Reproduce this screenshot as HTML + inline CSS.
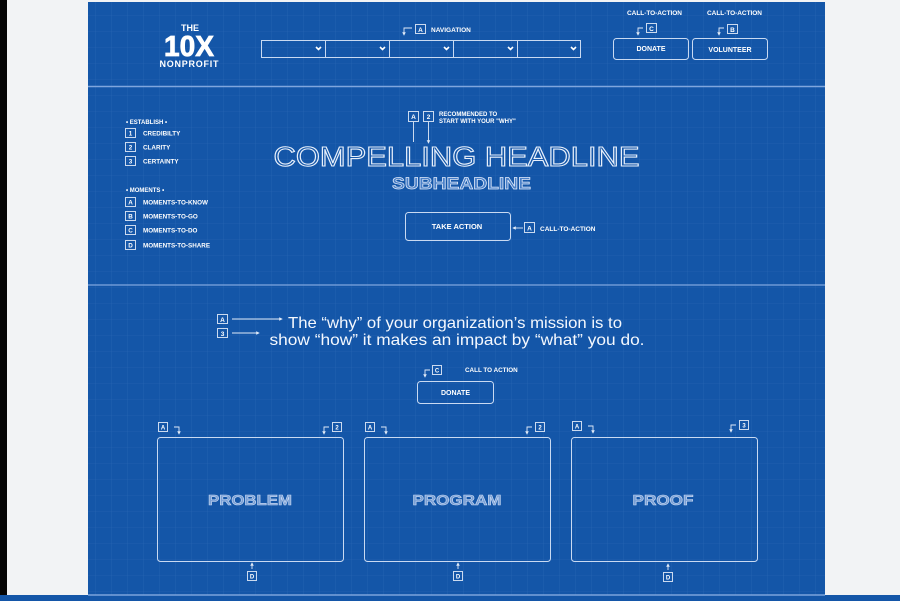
<!DOCTYPE html>
<html><head><meta charset="utf-8"><style>
html,body{margin:0;padding:0;background:#f2f3f5;}
svg{display:block}
text{font-family:"Liberation Sans",sans-serif;fill:#fff;font-weight:bold}
text.card{fill:#7aa0d6;stroke:#c8d9f2;stroke-width:0.6}
</style></head><body>
<svg width="900" height="601" viewBox="0 0 900 601" xmlns="http://www.w3.org/2000/svg">
<defs>
<pattern id="g" width="16" height="16" patternUnits="userSpaceOnUse">
<path d="M16 0V16M0 16H16" stroke="#2a68b4" stroke-width="0.6" fill="none"/>
</pattern>
<marker id="ah" markerWidth="4" markerHeight="4" refX="2" refY="2" orient="auto"><path d="M0,0L4,2L0,4z" fill="#dfe9f7"/></marker>
</defs>
<rect width="900" height="601" fill="#f2f3f5"/>
<rect x="0" y="0" width="7" height="601" fill="#050505"/>
<rect x="88" y="2" width="737" height="599" fill="#1456a8"/>
<rect x="88" y="2" width="737" height="599" fill="url(#g)"/>
<rect x="0" y="595" width="900" height="6" fill="#1456a8"/>
<line x1="88" y1="595" x2="825" y2="595" stroke="#8fb4e6" stroke-width="1.2"/>
<line x1="88" y1="86.5" x2="825" y2="86.5" stroke="#7fa6dd" stroke-width="1.5"/>
<line x1="88" y1="285" x2="825" y2="285" stroke="#7fa6dd" stroke-width="1.2"/>

<text x="190" y="31" font-size="9" text-anchor="middle">THE</text>
<text x="189" y="56" font-size="29" text-anchor="middle" textLength="50" lengthAdjust="spacingAndGlyphs" style="stroke:#fff;stroke-width:0.8">10X</text>
<text x="189" y="67" font-size="9" text-anchor="middle" textLength="59">NONPROFIT</text>

<g fill="none" stroke="#c9daf2" stroke-width="1">
<rect x="261.5" y="40.5" width="319" height="17"/>
<line x1="325.5" y1="40" x2="325.5" y2="58"/><line x1="389.5" y1="40" x2="389.5" y2="58"/>
<line x1="453.5" y1="40" x2="453.5" y2="58"/><line x1="517.5" y1="40" x2="517.5" y2="58"/>
</g>
<g fill="none" stroke="#fff" stroke-width="1.6">
<path d="M316 47l2.5 2.5 2.5-2.5M380 47l2.5 2.5 2.5-2.5M444 47l2.5 2.5 2.5-2.5M508 47l2.5 2.5 2.5-2.5M571 47l2.5 2.5 2.5-2.5"/>
</g>
<g fill="none" stroke="#dfe9f7" stroke-width="0.9">
<path d="M412 28h-8v6" marker-end="url(#ah)"/><rect x="415.5" y="24.5" width="10" height="9"/>
<path d="M643 28h-5v6" marker-end="url(#ah)"/><rect x="646.5" y="23.5" width="10" height="9"/>
<path d="M724 28h-5v6" marker-end="url(#ah)"/><rect x="727.5" y="24.5" width="10" height="9"/>
</g>
<text x="420.5" y="32" font-size="6.5" text-anchor="middle">A</text>
<text x="431" y="32" font-size="6.5">NAVIGATION</text>
<text x="651.5" y="31" font-size="6.5" text-anchor="middle">C</text>
<text x="732.5" y="32" font-size="6.5" text-anchor="middle">B</text>
<text x="627" y="15" font-size="6.5" textLength="55">CALL-TO-ACTION</text>
<text x="707" y="15" font-size="6.5" textLength="55">CALL-TO-ACTION</text>
<g fill="none" stroke="#c9daf2" stroke-width="1">
<rect x="613.5" y="38.5" width="75" height="21" rx="3"/>
<rect x="692.5" y="38.5" width="75" height="21" rx="3"/>
</g>
<text x="651" y="51" font-size="7" text-anchor="middle">DONATE</text>
<text x="730" y="52" font-size="7" text-anchor="middle">VOLUNTEER</text>

<text x="126" y="124" font-size="6">• ESTABLISH •</text>
<text x="126" y="192" font-size="6">• MOMENTS •</text>
<g fill="none" stroke="#dfe9f7" stroke-width="0.9">
<rect x="125.5" y="128.5" width="10" height="9"/><rect x="125.5" y="142.5" width="10" height="9"/><rect x="125.5" y="156.5" width="10" height="9"/>
<rect x="125.5" y="197.5" width="10" height="9"/><rect x="125.5" y="211.5" width="10" height="9"/><rect x="125.5" y="225.5" width="10" height="9"/><rect x="125.5" y="240.5" width="10" height="9"/>
</g>
<g font-size="6.3">
<text x="130.5" y="135.5" text-anchor="middle">1</text><text x="143" y="135.5">CREDIBILTY</text>
<text x="130.5" y="149.5" text-anchor="middle">2</text><text x="143" y="149.5">CLARITY</text>
<text x="130.5" y="163.5" text-anchor="middle">3</text><text x="143" y="163.5">CERTAINTY</text>
<text x="130.5" y="204.5" text-anchor="middle">A</text><text x="143" y="204.5">MOMENTS-TO-KNOW</text>
<text x="130.5" y="218.5" text-anchor="middle">B</text><text x="143" y="218.5">MOMENTS-TO-GO</text>
<text x="130.5" y="232.5" text-anchor="middle">C</text><text x="143" y="232.5">MOMENTS-TO-DO</text>
<text x="130.5" y="247.5" text-anchor="middle">D</text><text x="143" y="247.5">MOMENTS-TO-SHARE</text>
</g>

<g fill="none" stroke="#dfe9f7" stroke-width="0.9">
<rect x="408.5" y="111.5" width="10" height="10"/><rect x="423.5" y="111.5" width="10" height="10"/>
<path d="M413.5 122v20M428.5 122v20" marker-end="url(#ah)"/>
</g>
<text x="413.5" y="119" font-size="6.5" text-anchor="middle">A</text>
<text x="428.5" y="119" font-size="6.5" text-anchor="middle">2</text>
<text x="439" y="116" font-size="6">RECOMMENDED TO</text>
<text x="439" y="123" font-size="6">START WITH YOUR "WHY"</text>
<text x="456.5" y="166" font-size="28" text-anchor="middle" textLength="366" lengthAdjust="spacingAndGlyphs" style="fill:none;stroke:#e8f0fb;stroke-width:1.1;font-weight:normal">COMPELLING HEADLINE</text>
<text x="461.5" y="189" font-size="17" text-anchor="middle" textLength="139" lengthAdjust="spacingAndGlyphs" style="fill:#4a80c8;stroke:#e0eafa;stroke-width:0.7">SUBHEADLINE</text>
<rect x="405.5" y="212.5" width="105" height="28" rx="3" fill="none" stroke="#c9daf2"/>
<text x="457" y="229" font-size="7.5" text-anchor="middle">TAKE ACTION</text>
<g fill="none" stroke="#dfe9f7" stroke-width="0.9">
<path d="M523 228h-9" marker-end="url(#ah)"/><rect x="524.5" y="222.5" width="10" height="10"/>
</g>
<text x="529.5" y="230.5" font-size="6.5" text-anchor="middle">A</text>
<text x="540" y="231" font-size="6.5">CALL-TO-ACTION</text>

<g fill="none" stroke="#dfe9f7" stroke-width="0.9">
<rect x="217.5" y="314.5" width="10" height="9"/><rect x="217.5" y="328.5" width="10" height="9"/>
<path d="M232 319h49" marker-end="url(#ah)"/><path d="M232 333h26" marker-end="url(#ah)"/>
</g>
<text x="222.5" y="322" font-size="6.5" text-anchor="middle">A</text>
<text x="222.5" y="336" font-size="6.5" text-anchor="middle">3</text>
<text x="455" y="328" font-size="16" text-anchor="middle" textLength="334" lengthAdjust="spacingAndGlyphs" style="font-weight:normal;fill:#f4f8fe">The “why” of your organization’s mission is to</text>
<text x="457" y="345" font-size="16" text-anchor="middle" textLength="375" lengthAdjust="spacingAndGlyphs" style="font-weight:normal;fill:#f4f8fe">show “how” it  makes an impact by “what” you do.</text>
<g fill="none" stroke="#dfe9f7" stroke-width="0.9">
<path d="M430 370h-5v6" marker-end="url(#ah)"/><rect x="432.5" y="365.5" width="9" height="9"/>
</g>
<text x="437" y="372.5" font-size="6" text-anchor="middle">C</text>
<text x="465" y="372" font-size="6.3">CALL TO ACTION</text>
<rect x="417.5" y="381.5" width="76" height="22" rx="3" fill="none" stroke="#c9daf2"/>
<text x="455.5" y="395" font-size="7" text-anchor="middle">DONATE</text>

<g fill="none" stroke="#c9daf2" stroke-width="1">
<rect x="157.5" y="437.5" width="186" height="124" rx="3"/>
<rect x="364.5" y="437.5" width="186" height="124" rx="3"/>
<rect x="571.5" y="437.5" width="186" height="124" rx="3"/>
</g>
<g fill="none" stroke="#dfe9f7" stroke-width="0.9">
<rect x="158.5" y="422.5" width="9" height="9"/><path d="M174 427h5v6" marker-end="url(#ah)"/>
<rect x="332.5" y="422.5" width="9" height="9"/><path d="M329 427h-5v6" marker-end="url(#ah)"/>
<rect x="365.5" y="422.5" width="9" height="9"/><path d="M381 427h5v6" marker-end="url(#ah)"/>
<rect x="535.5" y="422.5" width="9" height="9"/><path d="M532 427h-5v6" marker-end="url(#ah)"/>
<rect x="572.5" y="421.5" width="9" height="9"/><path d="M588 426h5v6" marker-end="url(#ah)"/>
<rect x="739.5" y="420.5" width="9" height="9"/><path d="M736 425h-5v6" marker-end="url(#ah)"/>
<rect x="247.5" y="571.5" width="9" height="9"/><path d="M252 569v-5" marker-end="url(#ah)"/>
<rect x="453.5" y="571.5" width="9" height="9"/><path d="M458 569v-5" marker-end="url(#ah)"/>
<rect x="663.5" y="572.5" width="9" height="9"/><path d="M668 570v-5" marker-end="url(#ah)"/>
</g>
<g font-size="6">
<text x="163" y="429.5" text-anchor="middle">A</text><text x="337" y="429.5" text-anchor="middle">2</text>
<text x="370" y="429.5" text-anchor="middle">A</text><text x="540" y="429.5" text-anchor="middle">2</text>
<text x="577" y="428.5" text-anchor="middle">A</text><text x="744" y="427.5" text-anchor="middle">3</text>
<text x="252" y="578.5" text-anchor="middle">D</text><text x="458" y="578.5" text-anchor="middle">D</text><text x="668" y="579.5" text-anchor="middle">D</text>
</g>
<text class="card" x="250" y="505" font-size="15" text-anchor="middle" textLength="84" lengthAdjust="spacingAndGlyphs">PROBLEM</text>
<text class="card" x="457" y="505" font-size="15" text-anchor="middle" textLength="89" lengthAdjust="spacingAndGlyphs">PROGRAM</text>
<text class="card" x="663" y="505" font-size="15" text-anchor="middle" textLength="61" lengthAdjust="spacingAndGlyphs">PROOF</text>
</svg>
</body></html>
